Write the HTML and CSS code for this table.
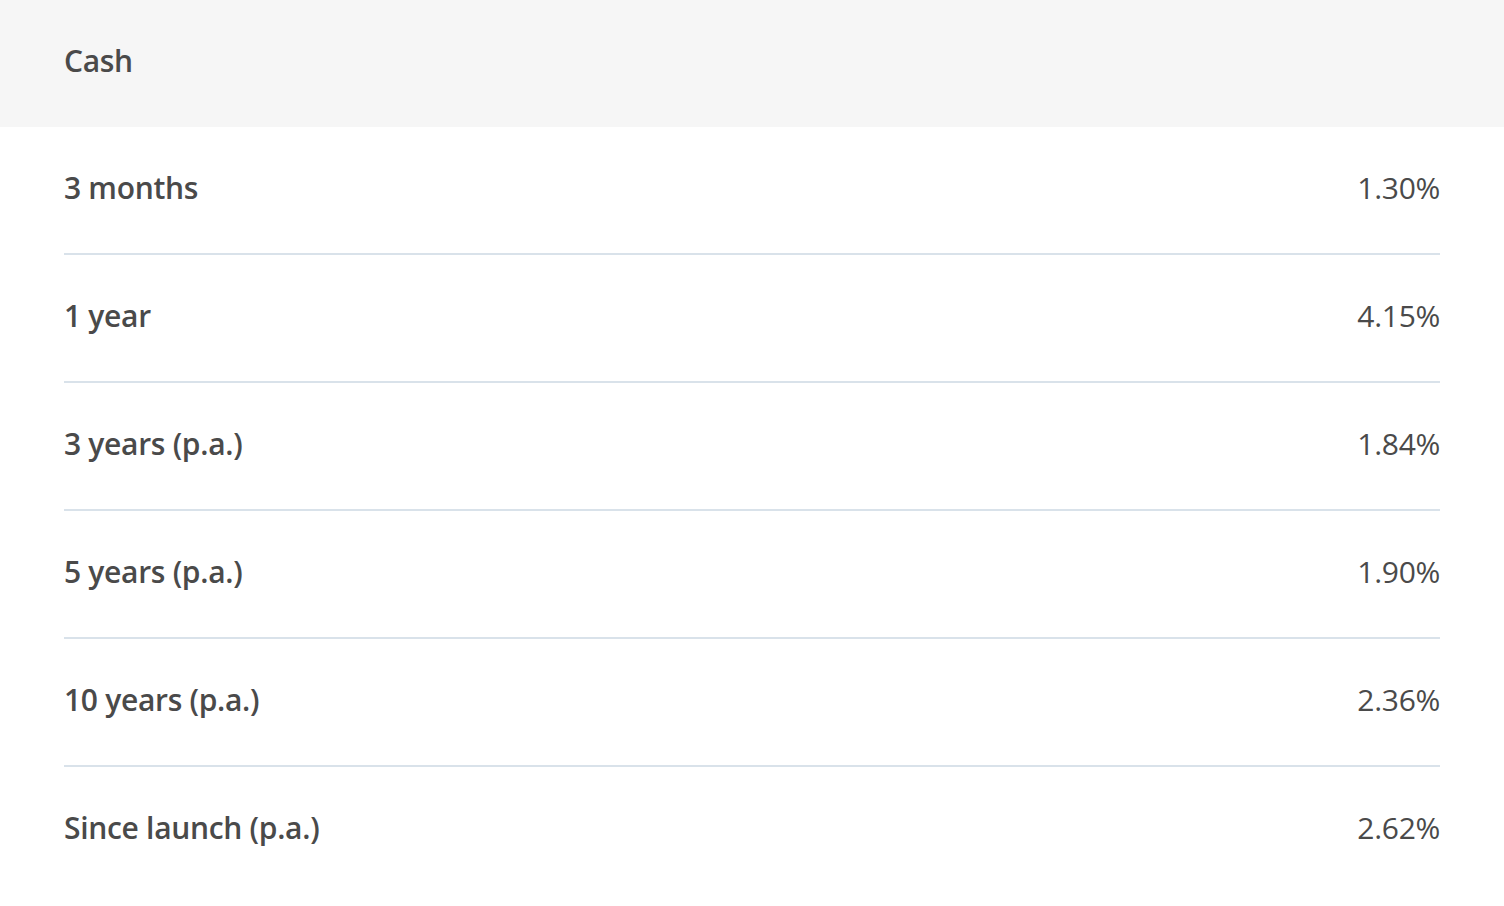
FILE: index.html
```html
<!DOCTYPE html>
<html lang="en">
<head>
<meta charset="utf-8">
<title>Cash performance</title>
<link rel="stylesheet" href="styles.css">
</head>
<body>
<div class="panel">
  <div class="panel-header">Cash</div>
  <div class="rows">
    <div class="row"><span class="label">3 months</span><span class="value">1.30%</span></div>
    <div class="row"><span class="label">1 year</span><span class="value">4.15%</span></div>
    <div class="row"><span class="label">3 years (p.a.)</span><span class="value">1.84%</span></div>
    <div class="row"><span class="label">5 years (p.a.)</span><span class="value">1.90%</span></div>
    <div class="row"><span class="label">10 years (p.a.)</span><span class="value">2.36%</span></div>
    <div class="row"><span class="label">Since launch (p.a.)</span><span class="value">2.62%</span></div>
  </div>
</div>
</body>
</html>
```

FILE: styles.css
```css
html, body {
  margin: 0;
  padding: 0;
  background: #ffffff;
}
body {
  font-family: "Open Sans", "Noto Sans", sans-serif;
  color: #4a4a4a;
}
.panel-header {
  height: 127px;
  box-sizing: border-box;
  background: #f6f6f6;
  padding: 0 64px 7px;
  display: flex;
  align-items: center;
  font-size: 30px;
  font-weight: 600;
  letter-spacing: -0.3px;
}
.rows {
  padding: 0 64px;
}
.row {
  height: 126px;
  box-sizing: content-box;
  padding-bottom: 0;
  display: flex;
  align-items: center;
  justify-content: space-between;
  border-bottom: 2px solid #d9e2ea;
  font-size: 30px;
}
.row:last-child {
  border-bottom: none;
}
.label {
  font-weight: 600;
  letter-spacing: -0.3px;
  margin-bottom: 6px;
}
.value {
  font-weight: 400;
  letter-spacing: -0.3px;
  margin-bottom: 6px;
}
```
